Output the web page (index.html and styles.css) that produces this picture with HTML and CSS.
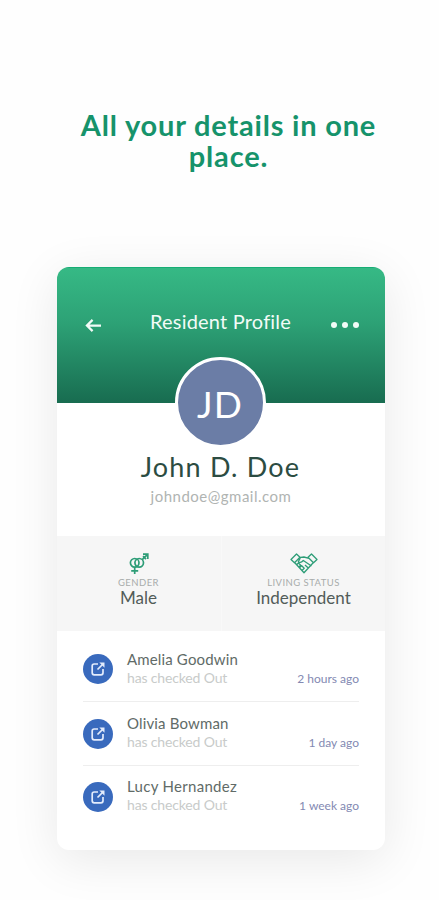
FILE: index.html
```html
<!DOCTYPE html>
<html lang="en">
<head>
<meta charset="utf-8">
<meta name="viewport" content="width=device-width, initial-scale=1">
<title>Resident Profile</title>
<link rel="stylesheet" href="styles.css">
</head>
<body>
<svg class="defs" width="0" height="0">
  <symbol id="out" viewBox="0 0 16 16"><path d="M8 3H4.200Q2.200 3 2.200 5v6.800Q2.200 13.800 4.200 13.800H11Q13 13.800 13 11.800V8M7.500 8.500L13 3" fill="none" stroke="currentColor" stroke-width="1.700"/><path d="M9.300 1.500h5.200v5.200z" fill="currentColor"/></symbol>
</svg>
<main class="page">
  <h1 class="headline">All your details in one place.</h1>
  <section class="card">
    <header class="banner">
      <svg class="back" viewBox="0 0 18 16"><path d="M8 2L2 8l6 6M2.500 8H17" fill="none" stroke="currentColor" stroke-width="2.400"/></svg>
      <h2 class="title">Resident Profile</h2>
      <div class="more"><i></i><i></i><i></i></div>
    </header>
    <div class="person">
      <div class="avatar">JD</div>
      <div class="name">John D. Doe</div>
      <div class="email">johndoe@gmail.com</div>
    </div>
    <div class="stats">
      <div class="stat">
        <svg class="gender" viewBox="0 0 20 21" fill="none" stroke="currentColor" stroke-width="1.700"><circle cx="5.700" cy="9.800" r="4.300"/><circle cx="10.200" cy="9.800" r="4.300"/><path d="M5.700 14v7M2.200 17.800h7M13.200 6.700L18.600 1.400M14 1.200h4.800V6M14 3.200l3 3"/></svg>
        <span class="label">GENDER</span>
        <span class="value">Male</span>
      </div>
      <div class="stat">
        <svg class="hands" viewBox="0 0 28 21" fill="none" stroke="currentColor" stroke-width="1.300" stroke-linejoin="round"><path d="M6.500 1L1 6.500l3.500 3.300L10 4.300zM21.500 1L27 6.500l-3.500 3.300L18 4.300zM8.800 4.600L14 4l5 1.300M10.500 4.600L8.300 8.700q2.500 1.800 5-1.200l8.200 5.500M4.800 9.800L14 19.700l9.200-9.900M6.300 12l2.200-2 2.200 2.200-2 2M9.500 14.800l2.200-2 2.500 2.400-2 2.200M18.300 15l-3.300-3"/></svg>
        <span class="label">LIVING STATUS</span>
        <span class="value">Independent</span>
      </div>
    </div>
    <ul class="log">
      <li class="entry"><span class="badge"><svg viewBox="0 0 16 16"><use href="#out"/></svg></span><div class="who"><b>Amelia Goodwin</b><span>has checked Out</span></div><time>2 hours ago</time></li>
      <li class="entry"><span class="badge"><svg viewBox="0 0 16 16"><use href="#out"/></svg></span><div class="who"><b>Olivia Bowman</b><span>has checked Out</span></div><time>1 day ago</time></li>
      <li class="entry"><span class="badge"><svg viewBox="0 0 16 16"><use href="#out"/></svg></span><div class="who"><b>Lucy Hernandez</b><span>has checked Out</span></div><time>1 week ago</time></li>
    </ul>
  </section>
</main>
</body>
</html>
```
FILE: styles.css
```css
* { box-sizing: border-box; }
body { margin: 0; background: #fefefe; font-family: Lato, "Liberation Sans", sans-serif; }
.defs { display: block; }
.page { height: 900px; padding-top: 109px; overflow: hidden; }
.headline { margin: 0 auto; width: 340px; padding-left: 18px; font-size: 29px; line-height: 31px; letter-spacing: .8px; font-weight: 700; text-align: center; color: #16936b; }
.card { width: 328px; height: 583px; margin: 96px 0 0 57px; border-radius: 12px; background: #fff; overflow: hidden; box-shadow: 0 10px 50px rgba(0, 0, 0, .09); }
.banner { height: 136px; padding: 0 26px 0 28px; display: flex; justify-content: space-between; align-items: flex-start; color: #f2fbf7; background: linear-gradient(#36b985, #2da276 40%, #186c50); border-top: 1px solid #16ad74; }
.back { width: 17px; height: 15px; margin-top: 50px; }
.title { margin: 41px 0 0 8px; font-size: 20px; line-height: 24px; letter-spacing: .2px; font-weight: 400; white-space: nowrap; }
.more { display: flex; gap: 5px; margin-top: 54px; }
.more i { width: 6px; height: 6px; border-radius: 50%; background: currentColor; }
.person { height: 133px; padding-right: 2px; display: flex; flex-direction: column; align-items: center; }
.avatar { flex: none; width: 91px; height: 91px; margin: -46px 0 0; border: 3px solid #fff; border-radius: 50%; background: #6b7da6; color: #fff; font-size: 37px; line-height: 87px; letter-spacing: 1px; text-align: center; }
.name { margin: 2px 0 0 1px; font-size: 27px; line-height: 34px; letter-spacing: 1.2px; color: #2c4c42; font-weight: 400; }
.email { margin-left: 2px; font-size: 15px; line-height: 24px; letter-spacing: .5px; color: #b0b4b2; }
.stats { height: 95px; display: grid; grid-template-columns: 1fr 1fr; background: #f6f6f6; }
.stat { display: flex; flex-direction: column; align-items: center; padding-top: 17px; color: #2d9d77; }
.stat:first-child { padding-right: 1px; }
.stat + .stat { border-left: 1px solid #f9f9f9; }
.gender { width: 20px; height: 21px; }
.hands { width: 28px; height: 21px; }
.label { margin-top: 3px; font-size: 9.5px; line-height: 12px; letter-spacing: .45px; color: #a8acab; }
.value { font-size: 17px; line-height: 18px; color: #525c59; }
.log { list-style: none; margin: 0; padding: 6px 26px 0; }
.entry { height: 64px; display: flex; align-items: flex-start; }
.entry + .entry { border-top: 1px solid #eee; }
.badge { width: 30px; height: 30px; margin-top: 17px; border-radius: 50%; background: #396abd; color: #e3ecfc; display: grid; place-items: center; }
.badge svg { width: 16px; height: 16px; }
.who { flex: 1; margin: 12px 0 0 14px; display: flex; flex-direction: column; }
.entry + .entry .who { margin-top: 11px; }
.entry + .entry time { margin-top: 32px; }
.entry:last-child .badge { margin-top: 16px; }
.entry + .entry:last-child .who { margin-top: 10px; }
.entry + .entry:last-child time { margin-top: 31px; }
.who b { font-size: 15px; line-height: 20px; letter-spacing: .15px; font-weight: 400; color: #616b67; }
.entry:last-child b { letter-spacing: .3px; }
.who span { font-size: 14px; line-height: 18px; letter-spacing: -.15px; color: #c8cbca; }
time { margin-top: 33px; font-size: 12px; line-height: 17px; color: #8389b2; }
```
